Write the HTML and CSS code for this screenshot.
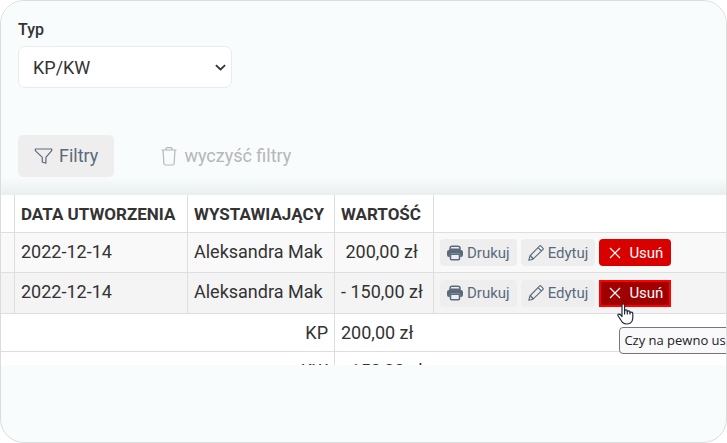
FILE: index.html
```html
<!DOCTYPE html>
<html lang="pl">
<head>
<meta charset="utf-8">
<title>KP/KW</title>
<link rel="stylesheet" href="styles.css">
</head>
<body>
<svg class="symbols" aria-hidden="true">
  <symbol id="funnel" viewBox="0 0 18 17"><path d="M.8 1h16.4v1.600L11.400 9.400v5.800L7.800 14V9.400L.8 2.600z" fill="none" stroke="currentColor" stroke-width="1.200" stroke-linejoin="round"/></symbol>
  <symbol id="trash" viewBox="0 0 16 19"><path d="M.5 3h15M5 3V1.800Q5 .7 6.200.7h3.600Q11 .7 11 1.800V3M2 3l.9 13.500q.1 1.500 1.500 1.500h7.200q1.400 0 1.500-1.500L14 3" fill="none" stroke="currentColor" stroke-width="1.200"/></symbol>
  <symbol id="printer" viewBox="0 0 16 16"><path d="M5 1.200a2 2 0 0 0-2 2v1h10v-1a2 2 0 0 0-2-2zM4.500 9.200h7a1 1 0 0 1 1 1v3.600a1 1 0 0 1-1 1h-7a1 1 0 0 1-1-1v-3.600a1 1 0 0 1 1-1z" fill="none" stroke="currentColor" stroke-width="1.500"/><path d="M0 7a2 2 0 0 1 2-2h12a2 2 0 0 1 2 2v3a2 2 0 0 1-2 2h-.8v-2a1.500 1.500 0 0 0-1.500-1.500H4.300A1.500 1.500 0 0 0 2.800 10v2H2a2 2 0 0 1-2-2z" fill="currentColor"/></symbol>
  <symbol id="pencil" viewBox="0 0 16 16"><path d="M11.700.9q.5-.5 1 0l2.400 2.400q.5.500 0 1L5 14.200.8 15.300 1.900 11zM10 2.600 13.400 6M1.900 11h1.300v1.200h1.200v1.200H5v.8" fill="none" stroke="currentColor" stroke-width="1.100" stroke-linejoin="round"/></symbol>
  <symbol id="cross" viewBox="0 0 12 12"><path d="M1 1l10 10M11 1 1 11" fill="none" stroke="currentColor" stroke-width="1.200"/></symbol>
</svg>
<main class="card">
  <form class="filters">
    <label class="label" for="type">Typ</label>
    <div class="select-box">
      <select class="select" id="type"><option>KP/KW</option></select>
      <svg class="chevron" viewBox="0 0 10 6" aria-hidden="true"><path d="M.8.8 5 4.800 9.200.8" fill="none" stroke="currentColor" stroke-width="1.600"/></svg>
    </div>
    <div class="toolbar">
      <button class="btn-filter" type="button"><svg class="icon-funnel"><use href="#funnel"/></svg>Filtry</button>
      <button class="btn-clear" type="button"><svg class="icon-trash"><use href="#trash"/></svg>wyczyść filtry</button>
    </div>
  </form>
  <div class="table-box">
    <table class="table">
      <colgroup><col class="col-edge"><col class="col-date"><col class="col-person"><col class="col-value"><col></colgroup>
      <thead>
        <tr><th></th><th>DATA UTWORZENIA</th><th>WYSTAWIAJĄCY</th><th>WARTOŚĆ</th><th></th></tr>
      </thead>
      <tbody>
        <tr class="row">
          <td></td><td>2022-12-14</td><td>Aleksandra Mak</td><td class="amount">&nbsp;200,00 zł</td>
          <td>
            <div class="actions">
              <button class="btn" type="button"><svg class="icon"><use href="#printer"/></svg>Drukuj</button>
              <button class="btn" type="button"><svg class="icon"><use href="#pencil"/></svg>Edytuj</button>
              <button class="btn btn-delete" type="button"><svg class="icon-cross"><use href="#cross"/></svg>Usuń</button>
            </div>
          </td>
        </tr>
        <tr class="row row-active">
          <td></td><td>2022-12-14</td><td>Aleksandra Mak</td><td class="amount">- 150,00 zł</td>
          <td>
            <div class="actions">
              <button class="btn" type="button"><svg class="icon"><use href="#printer"/></svg>Drukuj</button>
              <button class="btn" type="button"><svg class="icon"><use href="#pencil"/></svg>Edytuj</button>
              <div class="anchor">
                <button class="btn btn-delete btn-hover" type="button"><svg class="icon-cross"><use href="#cross"/></svg>Usuń</button>
                <div class="tooltip" role="tooltip">Czy na pewno us</div>
                <svg class="cursor" viewBox="0 0 17 22" aria-hidden="true"><path d="M5 13.500V2.300Q5 .8 6.300.8t1.300 1.500V8q.2-1.200 1.400-1.200T10.300 8v.8q.2-1 1.400-1t1.300 1.300v.8q.3-.8 1.400-.8 1.400 0 1.400 1.500V15q0 3-2.300 5Q9 22.200 5.500 19.500L1.500 13.500Q.3 12 1.300 11.300t2.300.5z" fill="#fff" stroke="#222b3a" stroke-width="1.200" stroke-linejoin="round"/><path d="M7.600 7.500v4M10.300 8v3.500M13 9.500v2" stroke="#222b3a" stroke-width="1.200"/></svg>
              </div>
            </div>
          </td>
        </tr>
        <tr class="total"><td colspan="3">KP</td><td>200,00 zł</td><td></td></tr>
        <tr class="total"><td colspan="3">KW</td><td>- 150,00 zł</td><td></td></tr>
      </tbody>
    </table>
  </div>
</main>
</body>
</html>
```
FILE: styles.css
```css
* { box-sizing: border-box; }
body {
  margin: 0;
  background: #fff;
  color: #333;
  font: 18px/24px Roboto, "Liberation Sans", sans-serif;
}
.symbols { position: absolute; width: 0; height: 0; }
.card {
  min-height: 100vh;
  border: 1px solid #dcdcdc;
  border-radius: 24px;
  background: #f8fcfd;
  overflow: hidden;
}
.filters {
  padding: 17px 17px 18px;
  background: linear-gradient(to top, #e9eeef, #f8fcfd 18px);
}
.label { display: block; font-size: 16px; font-weight: 500; }
.select-box { position: relative; width: 214px; margin-top: 4px; }
.select {
  display: block;
  appearance: none;
  width: 100%;
  height: 42px;
  padding: 2px 14px 0;
  border: 1px solid #e9ebed;
  border-radius: 7px;
  background: #fff;
  color: #333;
  font: inherit;
}
.chevron { position: absolute; right: 6px; top: 18px; width: 11px; height: 7px; }
.toolbar { display: flex; gap: 47px; margin-top: 47px; }
button { border: 0; margin: 0; font: inherit; display: flex; align-items: center; }
.btn-filter {
  height: 42px;
  padding: 0 16px;
  gap: 6px;
  border-radius: 5px;
  background: #eee;
  color: #5a6a7c;
}
.btn-clear { padding: 0; gap: 7px; background: none; color: #b5b7b8; }
.icon-funnel { width: 19px; height: 17px; }
.icon-trash { width: 16px; height: 19px; }
.table-box { max-height: 170px; overflow: hidden; }
.table {
  width: 100%;
  table-layout: fixed;
  border-collapse: separate;
  border-spacing: 0;
  background: #fff;
}
.col-edge { width: 14px; }
.col-date { width: 173px; }
.col-person { width: 147px; }
.col-value { width: 99px; }
th, td {
  height: 38px;
  padding: 0 6px;
  border-right: 1px solid #dedede;
  border-bottom: 1px solid #dedede;
  text-align: left;
  white-space: nowrap;
}
th:last-child, td:last-child { border-right: 0; }
th { font-size: 17px; font-weight: 700; }
.row td { height: 40px; padding-bottom: 2px; background: #f9f9f9; }
.row-active td { height: 41px; background: #f4f4f4; }
.total td:first-child { text-align: right; }
.total td:nth-child(2) { border-right: 0; }
.actions { display: flex; gap: 4px; padding-top: 2px; }
.btn {
  height: 27px;
  padding: 0 7px;
  gap: 4px;
  border-radius: 4px;
  background: #eee;
  color: #5a6a7c;
  font-size: 15px;
}
.icon { width: 16px; height: 16px; }
.icon-cross { width: 12px; height: 12px; }
.btn-delete { padding: 0 8px 0 10px; gap: 8px; background: #d90000; color: #fff; }
.btn-hover { background: #a00000; border-radius: 0; outline: 2px solid #f00; outline-offset: -2px; }
.anchor { position: relative; }
.tooltip {
  position: absolute;
  left: 20px;
  top: 47px;
  width: 130px;
  padding: 2px 4px;
  border: 1px solid #777;
  border-radius: 4px;
  background: #f9f9fb;
  color: #222;
  font: 13px/21px "Open Sans", "Noto Sans", sans-serif;
}
.cursor { position: absolute; left: 18px; top: 23px; width: 17px; height: 22px; }
```
